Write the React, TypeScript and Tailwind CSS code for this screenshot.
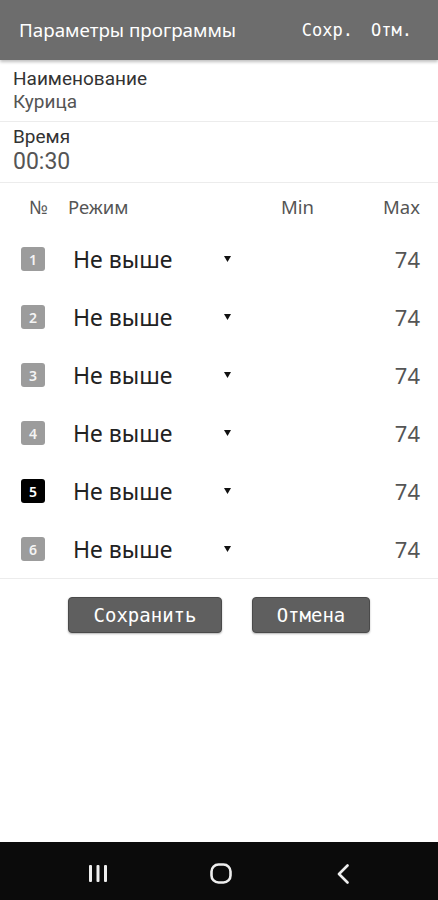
import React from "react";

const rows = [1, 2, 3, 4, 5, 6];

export default function App() {
  return (
    <div
      className="w-[438px] h-[900px] flex flex-col bg-white overflow-hidden"
      style={{ fontFamily: "'Noto Sans', Roboto, sans-serif" }}
    >
      {/* App bar */}
      <div className="h-[60px] bg-[#6d6d6d] flex items-center shadow-[0_2px_3px_rgba(0,0,0,0.25)] relative z-10 shrink-0">
        <div className="pl-[19px] text-[18.8px] text-white flex-1 leading-none">Параметры программы</div>
        <div
          className="text-white text-[17px] leading-none pr-[26px] flex gap-[18px]"
          style={{ fontFamily: "'DejaVu Sans Mono', monospace" }}
        >
          <span>Сохр.</span>
          <span>Отм.</span>
        </div>
      </div>

      {/* Name */}
      <div
        className="pl-[13px] pt-[8px] pb-[8px] border-b border-[#ececec]"
        style={{ fontFamily: "Roboto, sans-serif" }}
      >
        <div className="text-[19px] leading-[22px] text-[#333]">Наименование</div>
        <div className="text-[19px] leading-[23px] text-[#555]">Курица</div>
      </div>

      {/* Time */}
      <div
        className="pl-[13px] pt-[4px] pb-[6px] border-b border-[#ececec]"
        style={{ fontFamily: "Roboto, sans-serif" }}
      >
        <div className="text-[19px] leading-[22px] text-[#333]">Время</div>
        <div className="text-[23px] leading-[28px] text-[#555]">00:30</div>
      </div>

      {/* Table header */}
      <div className="h-[47px] flex items-center text-[18.5px] text-[#555]">
        <div className="w-[68px] pl-[29px]">№</div>
        <div className="w-[213px]">Режим</div>
        <div className="flex-1">Min</div>
        <div className="pr-[18px]">Max</div>
      </div>

      {/* Rows */}
      <div className="border-b border-[#ececec]">
        {rows.map((n) => (
          <div key={n} className="h-[58px] flex items-center">
            <div className="pl-[21px] w-[73px]">
              <div
                className={
                  n === 5
                    ? "w-[24px] h-[24px] rounded-[3px] bg-black text-white text-[14px] font-semibold flex items-center justify-center"
                    : "w-[24px] h-[24px] rounded-[3px] bg-[#9c9c9c] text-[#f4f4f4] text-[14px] font-semibold flex items-center justify-center"
                }
              >
                {n}
              </div>
            </div>
            <div className="w-[162px] flex items-center relative h-full">
              <span className="text-[23px] text-[#222]">Не выше</span>
              <svg
                className="absolute left-[151px] top-[26px]"
                width="7"
                height="6"
                viewBox="0 0 7 6"
              >
                <path d="M0 0 L7 0 L3.5 6 Z" fill="#111" />
              </svg>
            </div>
            <div className="flex-1" />
            <div className="pr-[18px] text-[22px] text-[#555]">74</div>
          </div>
        ))}
      </div>

      {/* Buttons */}
      <div className="flex pl-[68px] gap-[30px] pt-[18px]">
        <button
          className="w-[154px] h-[36px] bg-[#5f5f5f] border border-[#4a4a4a] rounded-[4px] text-white text-[19px] shadow-[0_1px_2px_rgba(0,0,0,0.3)] flex items-center justify-center"
          style={{ fontFamily: "'DejaVu Sans Mono', monospace" }}
        >
          Сохранить
        </button>
        <button
          className="w-[118px] h-[36px] bg-[#5f5f5f] border border-[#4a4a4a] rounded-[4px] text-white text-[19px] shadow-[0_1px_2px_rgba(0,0,0,0.3)] flex items-center justify-center"
          style={{ fontFamily: "'DejaVu Sans Mono', monospace" }}
        >
          Отмена
        </button>
      </div>

      <div className="flex-1" />

      {/* Navigation bar */}
      <div className="h-[58px] bg-[#0b0b0b] flex items-center shrink-0 relative">
        <svg className="absolute left-[88px] top-[23px]" width="20" height="17" viewBox="0 0 20 17">
          <rect x="1" y="0" width="3" height="17" rx="1" fill="#eee" />
          <rect x="8.5" y="0" width="3" height="17" rx="1" fill="#eee" />
          <rect x="16" y="0" width="3" height="17" rx="1" fill="#eee" />
        </svg>
        <svg className="absolute left-[210px] top-[21px]" width="22" height="21" viewBox="0 0 22 21">
          <rect x="1.5" y="1.5" width="19" height="18" rx="7" fill="none" stroke="#eee" strokeWidth="2.6" />
        </svg>
        <svg className="absolute left-[336px] top-[22px]" width="14" height="20" viewBox="0 0 14 20">
          <path d="M11.5 1.5 L3 10 L11.5 18.5" fill="none" stroke="#eee" strokeWidth="2.6" strokeLinecap="round" strokeLinejoin="round" />
        </svg>
      </div>
    </div>
  );
}
